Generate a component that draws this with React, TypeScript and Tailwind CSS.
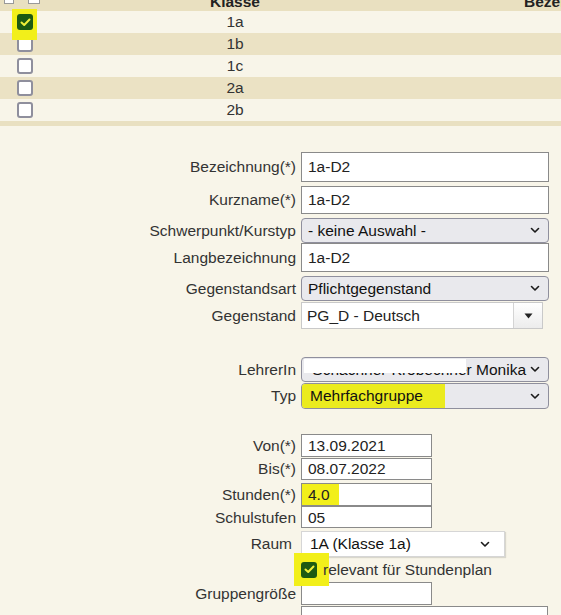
import type { ReactNode } from "react"

const rows = ["1a", "1b", "1c", "2a", "2b"]

function Chevron({ className = "" }: { className?: string }) {
  return (
    <svg width="10" height="7" viewBox="0 0 10 7" className={className}>
      <path d="M1.5 1.5 L5 5 L8.5 1.5" fill="none" stroke="#1a1a1a" strokeWidth="1.6" strokeLinecap="round" strokeLinejoin="round" />
    </svg>
  )
}

function Check({ checked = false }: { checked?: boolean }) {
  if (checked) {
    return (
      <span className="flex h-[16px] w-[16px] items-center justify-center rounded-[3px] bg-[#1c5a12]">
        <svg width="11" height="9" viewBox="0 0 11 9">
          <path d="M1.5 4.5 L4.2 7 L9.5 1.5" fill="none" stroke="#f0f03a" strokeWidth="2" strokeLinecap="round" strokeLinejoin="round" />
        </svg>
      </span>
    )
  }
  return <span className="block h-[16px] w-[16px] rounded-[3px] border-2 border-[#8f8f9d] bg-white" />
}

function Field({ label, children, className = "", labelClass = "" }: { label: string; children: ReactNode; className?: string; labelClass?: string }) {
  return (
    <div className={`flex items-center ${className}`}>
      <label className={`w-[301px] shrink-0 pr-[5px] text-right whitespace-nowrap ${labelClass}`}>{label}</label>
      {children}
    </div>
  )
}

function TextBox({ value = "", className = "" }: { value?: string; className?: string }) {
  return (
    <div className={`flex items-center border border-[#8a8a8a] bg-white px-[6px] text-[#222] ${className}`}>
      {value}
    </div>
  )
}

function Select({ value, className = "" }: { value: string; className?: string }) {
  return (
    <div className={`flex items-center justify-between rounded-[4px] border border-[#8f8f9d] bg-[#e9e9ed] pr-[8px] pl-[6px] text-[#111] ${className}`}>
      <span>{value}</span>
      <Chevron />
    </div>
  )
}

export default function App() {
  return (
    <div className="h-[615px] w-[561px] overflow-hidden bg-[#f8f5e9] font-['Tahoma','Liberation_Sans',sans-serif] text-[15.5px] text-[#333]">
      {/* class table */}
      <div className="-mt-[11px]">
        <div className="flex h-[22px] items-start overflow-hidden bg-[#e9e0c0]">
          <div className="flex w-[50px] shrink-0 gap-[14px] pt-[4px] pl-[4px]">
            <span className="block h-[11px] w-[10px] border border-[#999] bg-white" />
            <span className="block h-[11px] w-[12px] border border-[#999] bg-white" />
          </div>
          <div className="w-[370px] shrink-0 pt-[1px] text-center font-bold text-[#222]">Klasse</div>
          <div className="shrink-0 pt-[1px] pl-[104px] font-bold whitespace-nowrap text-[#222]">Bezeichnung</div>
        </div>
        {rows.map((r, i) => (
          <div key={r} className={`flex h-[22px] items-center ${i % 2 === 0 ? "bg-[#f8f5e9]" : "bg-[#ebe2c4]"}`}>
            <div className="flex w-[50px] shrink-0 justify-start pl-[17px]">
              {i === 0 ? (
                <span className="relative">
                  <span className="absolute -top-[5px] -left-[5px] h-[31px] w-[25px] bg-[#f2ef1a]" />
                  <span className="relative">
                    <Check checked />
                  </span>
                </span>
              ) : (
                <Check />
              )}
            </div>
            <div className="w-[370px] shrink-0 text-center">{r}</div>
          </div>
        ))}
        <div className="h-[5px] bg-[#e9e0c1]" />
      </div>

      {/* form */}
      <div className="flex flex-col">
        <Field label="Bezeichnung(*)" className="mt-[26px]">
          <TextBox value="1a-D2" className="h-[30px] w-[248px]" />
        </Field>
        <Field label="Kurzname(*)" className="mt-[4px]">
          <TextBox value="1a-D2" className="h-[28px] w-[248px]" />
        </Field>
        <Field label="Schwerpunkt/Kurstyp" className="mt-[4px]">
          <Select value="- keine Auswahl -" className="h-[25px] w-[248px]" />
        </Field>
        <Field label="Langbezeichnung" className="mt-[0px]">
          <TextBox value="1a-D2" className="h-[29px] w-[248px]" />
        </Field>
        <Field label="Gegenstandsart" className="mt-[4px]">
          <Select value="Pflichtgegenstand" className="h-[25px] w-[248px]" />
        </Field>
        <Field label="Gegenstand" className="mt-[1px]">
          <div className="flex h-[27px] w-[242px] items-stretch border border-[#c9c9c9] bg-white text-[#222]">
            <span className="flex flex-1 items-center px-[5px]">PG_D - Deutsch</span>
            <span className="flex w-[29px] items-center justify-center border-l border-[#d4d4d4] bg-gradient-to-b from-white to-[#ececec]">
              <svg width="9" height="6" viewBox="0 0 9 6">
                <path d="M0.5 0.5 L8.5 0.5 L4.5 5.5 Z" fill="#222" />
              </svg>
            </span>
          </div>
        </Field>

        <Field label="LehrerIn" className="mt-[28px]">
          <div className="relative h-[25px] w-[248px] overflow-hidden rounded-[4px] border border-[#8f8f9d] bg-[#e9e9ed] text-[#111]">
            <div className="flex h-full items-center justify-end gap-[4px] pr-[8px] whitespace-nowrap">
              <span>Schachner-Krobechner Monika</span>
              <Chevron />
            </div>
            <span className="absolute top-[1px] left-[2px] h-[14px] w-[162px] bg-white" />
          </div>
        </Field>
        <Field label="Typ" className="mt-[1px]">
          <div className="relative flex h-[26px] w-[248px] items-center justify-between overflow-hidden rounded-[4px] border border-[#8f8f9d] bg-[#e9e9ed] pr-[8px] text-[#111]">
            <span className="absolute top-0 bottom-0 left-0 w-[143px] bg-[#ebeb1e]" />
            <span className="relative pl-[8px]">Mehrfachgruppe</span>
            <Chevron className="relative" />
          </div>
        </Field>

        <Field label="Von(*)" className="mt-[25px]">
          <TextBox value="13.09.2021" className="h-[23px] w-[131px]" />
        </Field>
        <Field label="Bis(*)">
          <TextBox value="08.07.2022" className="h-[22px] w-[131px]" />
        </Field>
        <Field label="Stunden(*)" className="mt-[2px]">
          <div className="relative h-[23px] w-[131px] border border-[#8a8a8a] bg-white text-[#222]">
            <span className="absolute top-0 bottom-0 left-0 w-[37px] bg-[#f2ef1a]" />
            <span className="relative flex h-full items-center px-[6px]">4.0</span>
          </div>
        </Field>
        <Field label="Schulstufen">
          <TextBox value="05" className="h-[22px] w-[131px]" />
        </Field>
        <Field label="Raum" className="mt-[2px]" labelClass="pr-[9px]">
          <div className="flex h-[26px] w-[204px] items-center justify-between border border-[#d6d6d6] bg-white pr-[14px] pl-[8px] text-[#111] shadow-[1px_1px_1px_rgba(0,0,0,0.12)]">
            <span>1A (Klasse 1a)</span>
            <Chevron />
          </div>
        </Field>
        <div className="flex h-[25px] items-center pl-[301px]">
          <span className="relative flex items-center">
            <span className="absolute -top-[9px] -left-[7px] h-[33px] w-[35px] bg-[#f2ef1a]" />
            <span className="relative">
              <Check checked />
            </span>
          </span>
          <span className="relative pl-[6px]">relevant für Stundenplan</span>
        </div>
        <Field label="Gruppengröße">
          <TextBox className="h-[23px] w-[131px]" />
        </Field>
        <Field label="" className="mt-[1px]">
          <TextBox className="h-[40px] w-[247px]" />
        </Field>
      </div>
    </div>
  )
}
